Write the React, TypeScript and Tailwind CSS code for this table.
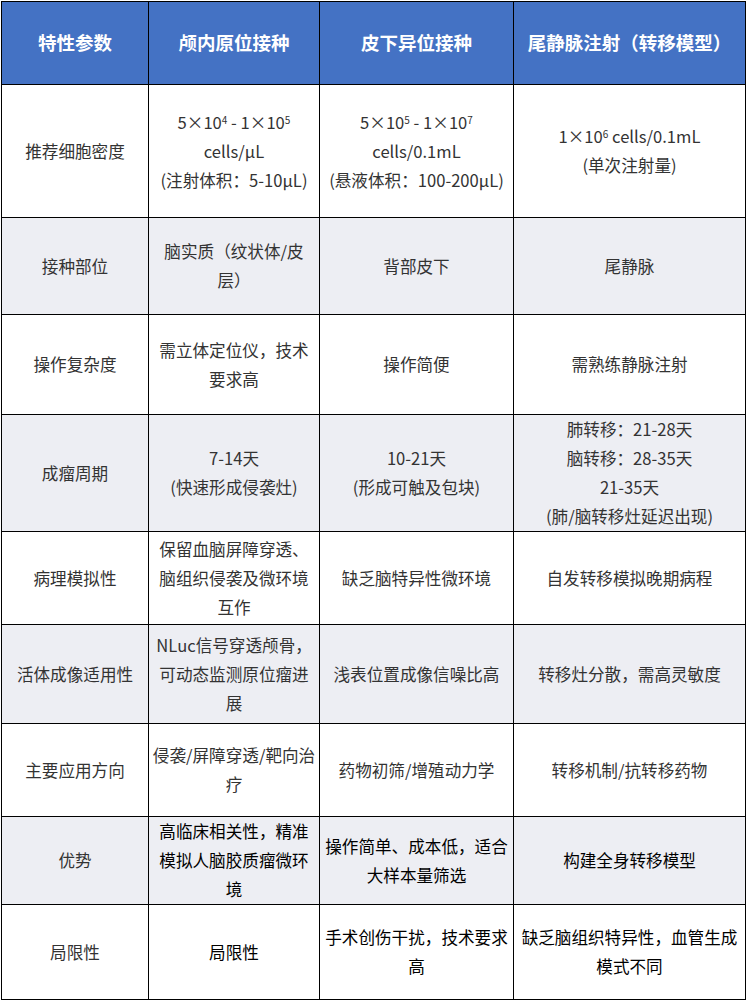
import type { ReactNode } from 'react'

type Row = {
  h: string
  gray?: boolean
  strong?: boolean
  cells: ReactNode[]
}

const rows: Row[] = [
  {
    h: 'h-[133px]',
    cells: [
      '推荐细胞密度',
      <>
        <div>
          5×10<sup className="text-[10px]">4</sup> - 1×10<sup className="text-[10px]">5</sup>
        </div>
        <div>cells/μL</div>
        <div>(注射体积：5-10μL)</div>
      </>,
      <>
        <div>
          5×10<sup className="text-[10px]">5</sup> - 1×10<sup className="text-[10px]">7</sup>
        </div>
        <div>cells/0.1mL</div>
        <div>(悬液体积：100-200μL)</div>
      </>,
      <>
        <div>
          1×10<sup className="text-[10px]">6</sup> cells/0.1mL
        </div>
        <div>(单次注射量)</div>
      </>,
    ],
  },
  { h: 'h-[97px]', gray: true, cells: ['接种部位', '脑实质（纹状体/皮层）', '背部皮下', '尾静脉'] },
  { h: 'h-[100px]', cells: ['操作复杂度', '需立体定位仪，技术要求高', '操作简便', '需熟练静脉注射'] },
  {
    h: 'h-[116px]',
    gray: true,
    cells: [
      '成瘤周期',
      <>
        <div>7-14天</div>
        <div>(快速形成侵袭灶)</div>
      </>,
      <>
        <div>10-21天</div>
        <div>(形成可触及包块)</div>
      </>,
      <>
        <div>肺转移：21-28天</div>
        <div>脑转移：28-35天</div>
        <div>21-35天</div>
        <div>(肺/脑转移灶延迟出现)</div>
      </>,
    ],
  },
  { h: 'h-[93px]', cells: ['病理模拟性', '保留血脑屏障穿透、脑组织侵袭及微环境互作', '缺乏脑特异性微环境', '自发转移模拟晚期病程'] },
  { h: 'h-[99px]', gray: true, cells: ['活体成像适用性', 'NLuc信号穿透颅骨，可动态监测原位瘤进展', '浅表位置成像信噪比高', '转移灶分散，需高灵敏度'] },
  {
    h: 'h-[93px]',
    cells: [
      '主要应用方向',
      <>
        <div className="whitespace-nowrap -mx-1">侵袭/屏障穿透/靶向治</div>
        <div>疗</div>
      </>,
      '药物初筛/增殖动力学',
      '转移机制/抗转移药物',
    ],
  },
  { h: 'h-[87px]', gray: true, strong: true, cells: ['优势', '高临床相关性，精准模拟人脑胶质瘤微环境', '操作简单、成本低，适合大样本量筛选', '构建全身转移模型'] },
  { h: 'h-[95px]', strong: true, cells: ['局限性', '局限性', '手术创伤干扰，技术要求高', '缺乏脑组织特异性，血管生成模式不同'] },
]

const headers = ['特性参数', '颅内原位接种', '皮下异位接种', '尾静脉注射（转移模型）']

export default function App() {
  return (
    <div className="bg-white w-[747px] min-h-[1000px] pt-px pl-px font-['Noto_Sans_CJK_SC','Noto_Sans',sans-serif]">
      <table className="table-fixed border-collapse w-[744px]">
        <colgroup>
          <col className="w-[147px]" />
          <col className="w-[171px]" />
          <col className="w-[194px]" />
          <col className="w-[232px]" />
        </colgroup>
        <thead>
          <tr className="h-[83px] bg-[#4472c4]">
            {headers.map((t) => (
              <th key={t} className="border border-black px-1 text-center align-middle text-white font-bold text-[18.5px]">
                {t}
              </th>
            ))}
          </tr>
        </thead>
        <tbody>
          {rows.map((r, i) => (
            <tr key={i} className={`${r.h} ${r.gray ? 'bg-[#edeef3]' : 'bg-white'}`}>
              {r.cells.map((c, j) => (
                <td
                  key={j}
                  className={`border border-black px-1 text-center align-middle text-[16.6px] leading-[29px] font-normal ${
                    r.strong && j > 0 ? 'text-black' : 'text-[#333]'
                  }`}
                >
                  {c}
                </td>
              ))}
            </tr>
          ))}
        </tbody>
      </table>
    </div>
  )
}
